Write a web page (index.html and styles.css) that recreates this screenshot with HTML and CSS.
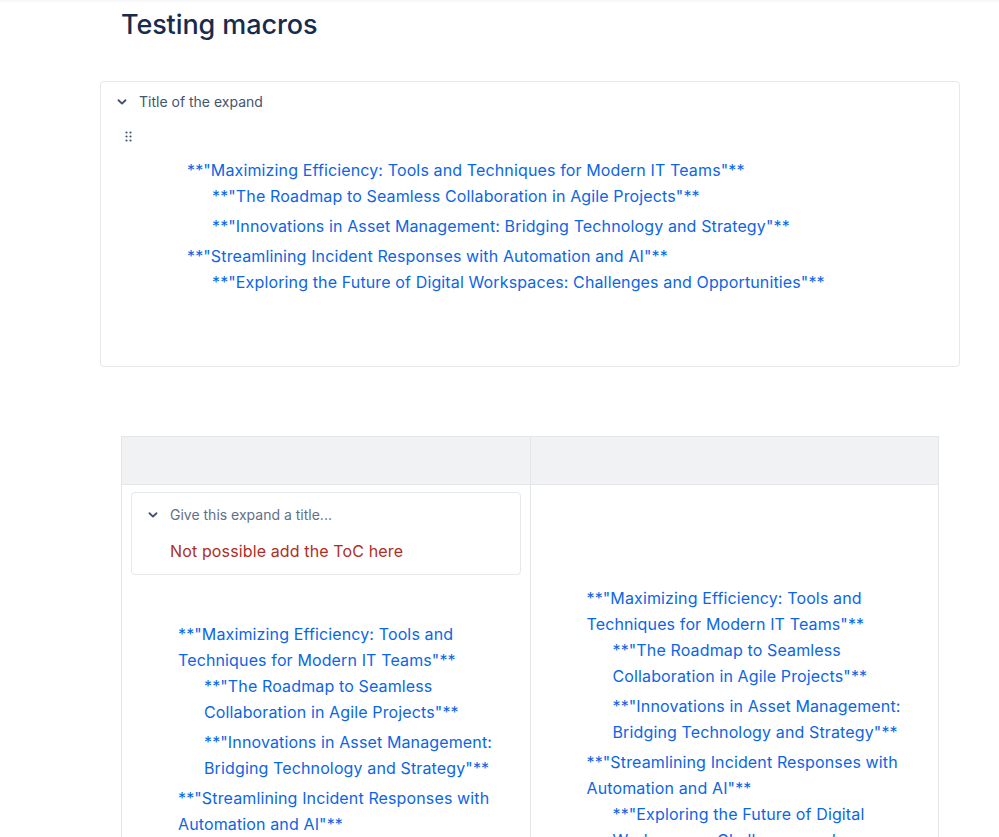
FILE: index.html
```html
<!DOCTYPE html>
<html lang="en">
<head>
<meta charset="utf-8">
<title>Testing macros</title>
<link rel="stylesheet" href="styles.css">
</head>
<body>
<div class="topbar"></div>
<main class="page">
  <h1 class="page-title">Testing macros</h1>

  <section class="expand expand-main">
    <div class="expand-header">
      <svg class="chevron" width="16" height="16" viewBox="0 0 16 16"><path d="M4.5 6.2 L8 9.6 L11.5 6.2" fill="none" stroke="#44546f" stroke-width="1.9" stroke-linecap="round" stroke-linejoin="round"/></svg>
      <span class="expand-title">Title of the expand</span>
    </div>
    <div class="expand-body">
      <div class="drag-handle">
        <svg width="8" height="12" viewBox="0 0 8 12"><g fill="#44546f"><circle cx="1.5" cy="1.5" r="1.1"/><circle cx="5.5" cy="1.5" r="1.1"/><circle cx="1.5" cy="5.5" r="1.1"/><circle cx="5.5" cy="5.5" r="1.1"/><circle cx="1.5" cy="9.5" r="1.1"/><circle cx="5.5" cy="9.5" r="1.1"/></g></svg>
      </div>
      <ul class="toc toc-main">
        <li><a href="#">**"Maximizing Efficiency: Tools and Techniques for Modern IT Teams"**</a>
          <ul class="toc">
            <li><a href="#">**"The Roadmap to Seamless Collaboration in Agile Projects"**</a></li>
            <li><a href="#">**"Innovations in Asset Management: Bridging Technology and Strategy"**</a></li>
          </ul>
        </li>
        <li><a href="#">**"Streamlining Incident Responses with Automation and AI"**</a>
          <ul class="toc">
            <li><a href="#">**"Exploring the Future of Digital Workspaces: Challenges and Opportunities"**</a></li>
          </ul>
        </li>
      </ul>
    </div>
  </section>

  <table class="grid">
    <thead>
      <tr><th></th><th></th></tr>
    </thead>
    <tbody>
      <tr>
        <td>
          <section class="expand expand-inner">
            <div class="expand-header">
              <svg class="chevron" width="16" height="16" viewBox="0 0 16 16"><path d="M4.5 6.2 L8 9.6 L11.5 6.2" fill="none" stroke="#44546f" stroke-width="1.9" stroke-linecap="round" stroke-linejoin="round"/></svg>
              <span class="expand-title placeholder">Give this expand a title...</span>
            </div>
            <p class="error-note">Not possible add the ToC here</p>
          </section>
          <ul class="toc toc-cell toc-left">
            <li><a href="#">**"Maximizing Efficiency: Tools and Techniques for Modern IT Teams"**</a>
              <ul class="toc">
                <li><a href="#">**"The Roadmap to Seamless Collaboration in Agile Projects"**</a></li>
                <li><a href="#">**"Innovations in Asset Management: Bridging Technology and Strategy"**</a></li>
              </ul>
            </li>
            <li><a href="#">**"Streamlining Incident Responses with Automation and AI"**</a>
              <ul class="toc">
                <li><a href="#">**"Exploring the Future of Digital Workspaces: Challenges and Opportunities"**</a></li>
              </ul>
            </li>
          </ul>
        </td>
        <td>
          <ul class="toc toc-cell toc-right">
            <li><a href="#">**"Maximizing Efficiency: Tools and Techniques for Modern IT Teams"**</a>
              <ul class="toc">
                <li><a href="#">**"The Roadmap to Seamless Collaboration in Agile Projects"**</a></li>
                <li><a href="#">**"Innovations in Asset Management: Bridging Technology and Strategy"**</a></li>
              </ul>
            </li>
            <li><a href="#">**"Streamlining Incident Responses with Automation and AI"**</a>
              <ul class="toc">
                <li><a href="#">**"Exploring the Future of Digital Workspaces: Challenges and Opportunities"**</a></li>
              </ul>
            </li>
          </ul>
        </td>
      </tr>
    </tbody>
  </table>
</main>
</body>
</html>
```
FILE: styles.css
```css
* { box-sizing: border-box; }

html, body {
  margin: 0;
  padding: 0;
  background: #ffffff;
}

body {
  font-family: Inter, "Noto Sans", "Liberation Sans", sans-serif;
  color: #172b4d;
}

.topbar {
  height: 2px;
  background: #f7f8f9;
}

.page {
  width: 860px;
  margin-left: 100px;
  padding-bottom: 40px;
}

.page-title {
  margin: 0;
  padding: 6px 0 0 21px;
  font-size: 27px;
  line-height: 34px;
  font-weight: 500;
  color: #172b4d;
  letter-spacing: -0.1px;
}

.expand {
  border: 1px solid #e6e8eb;
  border-radius: 4px;
  background: #ffffff;
}

.expand-main {
  margin-top: 39px;
  padding-bottom: 71px;
}

.expand-header {
  display: flex;
  align-items: center;
  gap: 9px;
  padding: 10px 0 0 13px;
  height: 30px;
}

.chevron {
  flex: none;
  display: block;
}

.expand-title {
  font-size: 14px;
  line-height: 20px;
  color: #44546f;
}

.placeholder {
  color: #626f86;
}

.expand-body {
  padding-left: 24px;
}

.drag-handle {
  display: flex;
  align-items: center;
  height: 20px;
  margin-top: 15px;
}

.drag-handle svg {
  display: block;
}

.toc {
  list-style: none;
  margin: 0;
  padding: 0 0 0 25px;
}

.toc li {
  font-size: 16px;
  line-height: 26px;
  letter-spacing: 0.13px;
}

.toc li + li {
  margin-top: 4px;
}

.toc ul.toc li:first-child {
  margin-top: 0;
}

.toc a {
  color: #0c66e4;
  text-decoration: none;
}

.toc-main {
  margin-top: 10px;
  padding-left: 62px;
}

.grid {
  margin: 69px 0 0 21px;
  width: 818px;
  border-collapse: collapse;
  table-layout: fixed;
}

.grid th,
.grid td {
  border: 1px solid #e4e6ea;
  vertical-align: top;
  padding: 7px 9px 10px 9px;
}

.grid th {
  background: #f1f2f4;
  height: 48px;
}

.expand-inner {
  padding-bottom: 11px;
}

.expand-inner .expand-header {
  padding-top: 12px;
  height: 32px;
}

.error-note {
  margin: 14px 0 0 38px;
  font-size: 16px;
  line-height: 24px;
  letter-spacing: 0.13px;
  color: #ae2e24;
}

.toc-cell {
  padding-left: 47px;
}

.toc-cell .toc {
  padding-left: 26px;
}

.toc-left {
  margin-top: 46px;
}

.toc-right {
  margin-top: 93px;
}
```
